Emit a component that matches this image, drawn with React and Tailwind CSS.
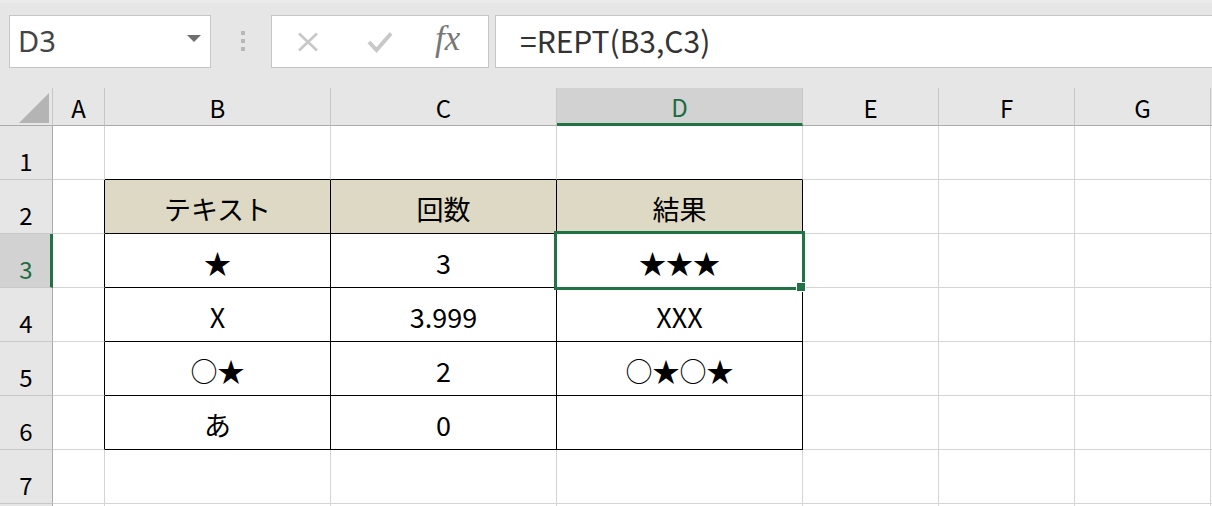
import React from 'react';

const COLS = [
  { key: 'A', w: 'w-[52px]' },
  { key: 'B', w: 'w-[226px]' },
  { key: 'C', w: 'w-[226px]' },
  { key: 'D', w: 'w-[246px]' },
  { key: 'E', w: 'w-[136px]' },
  { key: 'F', w: 'w-[136px]' },
  { key: 'G', w: 'w-[136px]' },
];

// sheet contents, keyed by row number
const DATA = {
  2: { B: 'テキスト', C: '回数', D: '結果' },
  3: { B: '★', C: '3', D: '★★★' },
  4: { B: 'X', C: '3.999', D: 'XXX' },
  5: { B: '○★', C: '2', D: '○★○★' },
  6: { B: 'あ', C: '0', D: '' },
};

const ROWS = [1, 2, 3, 4, 5, 6, 7, 8];
const inTable = (col) => col === 'B' || col === 'C' || col === 'D';

function XIcon() {
  return (
    <svg width="22" height="20" viewBox="0 0 22 20">
      <path d="M2 1.5 L20 18.5 M20 1.5 L2 18.5" stroke="#c8c8c8" strokeWidth="2.6" fill="none" />
    </svg>
  );
}

function CheckIcon() {
  return (
    <svg width="26" height="22" viewBox="0 0 26 22">
      <path d="M2 11 L9.5 19 L24 2.5" stroke="#c8c8c8" strokeWidth="4" fill="none" strokeLinejoin="miter" />
    </svg>
  );
}

function SelectAll() {
  return (
    <svg width="30" height="30" viewBox="0 0 30 30" className="absolute left-[19px] top-[5px]">
      <path d="M30 0 L30 30 L0 30 Z" fill="#b4b4b4" />
    </svg>
  );
}

function Toolbar() {
  return (
    <div className="h-[88px] bg-[#e6e6e6] border-t-[3px] border-[#ebebeb]">
      <div className="flex items-start pt-[12px] pl-[9px]">
        <div className="w-[202px] h-[53px] bg-white border border-[#c6c6c6] flex items-center justify-between pl-[8px] pr-[9px]">
          <span className="text-[29px] leading-none text-[#444] pb-[2px]" style={{ fontFamily: '"Noto Sans", sans-serif' }}>
            D3
          </span>
          <span className="w-0 h-0 border-l-[7px] border-r-[7px] border-t-[7px] border-l-transparent border-r-transparent border-t-[#6e6e6e] mb-[6px]" />
        </div>
        <div className="w-[60px] h-[53px] flex flex-col items-center pt-[16px] gap-[4px] pl-[3px]">
          <span className="w-[4px] h-[4px] bg-[#b8b8b8]" />
          <span className="w-[4px] h-[4px] bg-[#b8b8b8]" />
          <span className="w-[4px] h-[4px] bg-[#b8b8b8]" />
        </div>
        <div className="w-[218px] h-[53px] bg-white border border-[#c6c6c6] flex items-center pl-[25px]">
          <XIcon />
          <span className="ml-[48px]"><CheckIcon /></span>
          <span
            className="ml-[42px] text-[35px] italic leading-none text-[#777] pb-[6px]"
            style={{ fontFamily: '"Liberation Serif", serif' }}
          >
            fx
          </span>
        </div>
        <div className="ml-[6px] flex-1 -mr-[4px] h-[53px] bg-white border border-[#c6c6c6] flex items-center pl-[24px]">
          <span className="text-[30px] leading-none text-[#333] pb-[4px]">=REPT(B3,C3)</span>
        </div>
      </div>
    </div>
  );
}

function HeaderRow() {
  return (
    <div className="flex h-[38px] bg-[#e6e6e6]">
      <div className="w-[53px] h-full border-r border-b border-r-[#c6c6c6] border-b-[#ababab] relative">
        <SelectAll />
      </div>
      {COLS.map((c) =>
        c.key === 'D' ? (
          <div key={c.key} className={`${c.w} h-full bg-[#d2d2d2] border-r border-r-[#c6c6c6] border-b-[3px] border-b-[#217346] flex items-center justify-center pt-[3px] text-[24px] text-[#1e6b41]`}>
            {c.key}
          </div>
        ) : (
          <div key={c.key} className={`${c.w} h-full border-r border-r-[#c6c6c6] border-b border-b-[#ababab] flex items-center justify-center pt-[3px] text-[24px] text-black`}>
            {c.key}
          </div>
        )
      )}
      <div className="flex-1 h-full border-b border-b-[#ababab]" />
    </div>
  );
}

function Cell({ row, col }) {
  const value = DATA[row]?.[col.key] ?? '';
  const blackRight = row >= 2 && row <= 6 && (col.key === 'A' || inTable(col.key));
  const blackBottom = row >= 1 && row <= 6 && inTable(col.key);
  const right = blackRight ? 'border-r-black' : 'border-r-[#d4d4d4]';
  const bottom = blackBottom ? 'border-b-black' : 'border-b-[#d4d4d4]';
  const fill = row === 2 && inTable(col.key) ? 'bg-[#ddd9c4]' : 'bg-white';
  const selected = row === 3 && col.key === 'D';

  return (
    <div className={`${col.w} h-full border-r border-b ${right} ${bottom} ${fill} relative flex items-center justify-center pt-[4px] text-[27px] text-black`}>
      {value}
      {selected && (
        <>
          <div className="absolute z-10 -left-[3px] -top-[3px] w-[251px] h-[59px] border-[3px] border-[#217346]" />
          <div className="absolute z-20 left-[239px] top-[48px] w-[10px] h-[10px] bg-[#217346] border border-white" />
        </>
      )}
    </div>
  );
}

function SheetRow({ row }) {
  const active = row === 3;
  // the last row only peeks in at the bottom edge, its number stays out of view
  const label = row < 8 ? row : '';
  return (
    <div className="flex h-[54px]">
      {active ? (
        <div className="w-[53px] h-full bg-[#d2d2d2] border-r-[3px] border-r-[#217346] border-b border-b-[#c8c8c8] flex items-end justify-center pb-[6px] pl-[2px] text-[24px] text-[#1e6b41]">
          {label}
        </div>
      ) : (
        <div className="w-[53px] h-full bg-[#e6e6e6] border-r border-r-[#ababab] border-b border-b-[#c8c8c8] flex items-end justify-center pb-[6px] text-[24px] text-black">
          {label}
        </div>
      )}
      {COLS.map((c) => (
        <Cell key={c.key} row={row} col={c} />
      ))}
      <div className="flex-1 h-full border-b border-b-[#d4d4d4]" />
    </div>
  );
}

export default function App() {
  return (
    <div
      className="w-[1212px] h-[506px] overflow-hidden bg-white leading-none"
      style={{ fontFamily: '"Noto Sans CJK JP", "Noto Sans", sans-serif' }}
    >
      <Toolbar />
      <HeaderRow />
      {ROWS.map((r) => (
        <SheetRow key={r} row={r} />
      ))}
    </div>
  );
}
